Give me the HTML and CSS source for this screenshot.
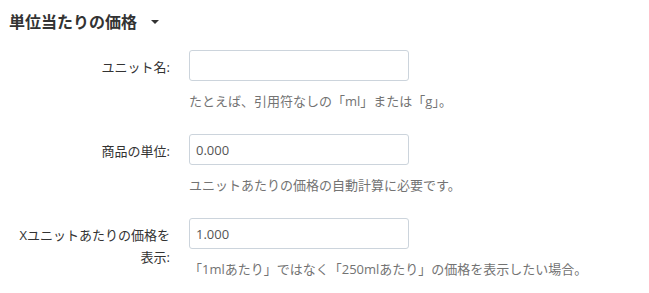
FILE: index.html
```html
<!DOCTYPE html>
<html lang="ja">
<head>
  <meta charset="UTF-8">
  <meta name="viewport" content="width=device-width, initial-scale=1.0">
  <title>単位当たりの価格</title>
  <link rel="stylesheet" href="styles.css">
</head>
<body>
  <h3 class="section-title">単位当たりの価格 <span class="caret"></span></h3>

  <div class="form-group">
    <label class="control-label" for="unit-name">ユニット名:</label>
    <div class="field">
      <input type="text" id="unit-name" class="form-control">
      <p class="help-block">たとえば、引用符なしの「ml」または「g」。</p>
    </div>
  </div>

  <div class="form-group">
    <label class="control-label" for="unit-size">商品の単位:</label>
    <div class="field">
      <input type="text" id="unit-size" class="form-control" value="0.000">
      <p class="help-block">ユニットあたりの価格の自動計算に必要です。</p>
    </div>
  </div>

  <div class="form-group">
    <label class="control-label" for="unit-display">Xユニットあたりの価格を表示:</label>
    <div class="field">
      <input type="text" id="unit-display" class="form-control" value="1.000">
      <p class="help-block">「1mlあたり」ではなく「250mlあたり」の価格を表示したい場合。</p>
    </div>
  </div>
</body>
</html>
```

FILE: styles.css
```css
* {
  margin: 0;
  padding: 0;
  box-sizing: border-box;
}

body {
  font-family: "Open Sans", "Noto Sans CJK JP", sans-serif;
  font-size: 13px;
  color: #333;
  background: #fff;
  padding: 12px 9px 0;
}

.section-title {
  font-size: 16px;
  font-weight: 700;
  line-height: 20px;
  color: #333;
  margin-bottom: 18px;
  display: flex;
  align-items: center;
}

.caret {
  display: inline-block;
  width: 0;
  height: 0;
  margin-left: 14px;
  border-top: 4px solid #333;
  border-left: 4px solid transparent;
  border-right: 4px solid transparent;
}

.form-group {
  display: flex;
  gap: 19px;
  margin-bottom: 24px;
}

.form-group:last-child {
  margin-bottom: 0;
}

.control-label {
  width: 161px;
  text-align: right;
  padding-top: 6px;
  line-height: 22px;
  padding-left: 10px;
}

.field {
  width: 420px;
}

.form-control {
  display: block;
  width: 220px;
  height: 31px;
  padding: 4px 6px;
  border: 1px solid #ccd4dc;
  border-radius: 3px;
  font-family: inherit;
  font-size: 13px;
  color: #555;
  outline: none;
}

.help-block {
  margin-top: 11px;
  line-height: 18px;
  color: #737373;
}
```
